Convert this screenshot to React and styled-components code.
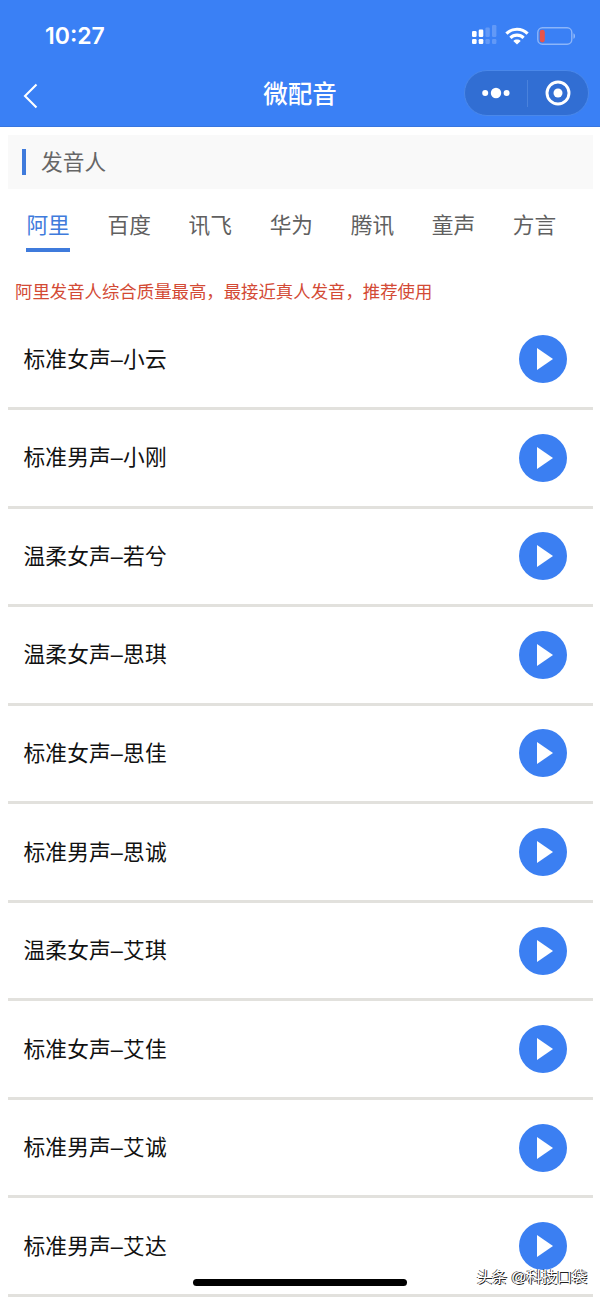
import { useState } from "react";
import styled, { createGlobalStyle } from "styled-components";

const tabs = ["阿里", "百度", "讯飞", "华为", "腾讯", "童声", "方言"];

const voices = [
  "标准女声–小云",
  "标准男声–小刚",
  "温柔女声–若兮",
  "温柔女声–思琪",
  "标准女声–思佳",
  "标准男声–思诚",
  "温柔女声–艾琪",
  "标准女声–艾佳",
  "标准男声–艾诚",
  "标准男声–艾达",
];

const SignalIcon = () => (
  <svg width="25" height="20" viewBox="0 0 25 20" fill="#fff">
    <rect x="0" y="6" width="4.6" height="6" rx="1.2" />
    <rect x="6.7" y="4.5" width="4.6" height="7.5" rx="1.2" />
    <rect x="0" y="14" width="4.6" height="5" rx="1.2" />
    <rect x="6.7" y="14" width="4.6" height="5" rx="1.2" />
    <g opacity="0.2">
      <rect x="13.4" y="2.5" width="4.4" height="9.5" rx="1.2" />
      <rect x="20" y="0" width="4.4" height="12" rx="1.2" />
      <rect x="13.4" y="14" width="4.4" height="5" rx="1.2" />
      <rect x="20" y="14" width="4.4" height="5" rx="1.2" />
    </g>
  </svg>
);

const WifiIcon = () => (
  <svg width="24" height="18" viewBox="0 0 24 18">
    <g fill="none" stroke="#fff" strokeWidth="3.1">
      <path d="M1.4 6.6C7.2 .8 16.8 .8 22.6 6.6" />
      <path d="M5.4 10.8C9 7.2 15 7.2 18.6 10.8" />
    </g>
    <path d="M12 17.6L8.3 13.9C10.3 12.1 13.7 12.1 15.7 13.9Z" fill="#fff" />
  </svg>
);

const BatteryIcon = () => (
  <svg width="39" height="18" viewBox="0 0 39 18">
    <rect
      x="0.8"
      y="0.8"
      width="34"
      height="16.4"
      rx="4.6"
      fill="none"
      stroke="#fff"
      strokeOpacity="0.42"
      strokeWidth="1.4"
    />
    <rect x="2.8" y="2.8" width="5" height="12.6" rx="2.4" fill="#e8544a" />
    <path d="M36.5 6.2C38.4 7 38.4 11 36.5 11.8Z" fill="#fff" opacity="0.5" />
  </svg>
);

const BackIcon = () => (
  <svg width="16" height="26" viewBox="0 0 16 26">
    <path
      d="M13.5 1.5L2 13L13.5 24.5"
      fill="none"
      stroke="#fff"
      strokeWidth="2.1"
    />
  </svg>
);

const MoreIcon = () => (
  <svg width="28" height="12" viewBox="0 0 28 12" fill="#fff">
    <circle cx="3.2" cy="6" r="3" />
    <circle cx="14" cy="6" r="5.2" />
    <circle cx="24.6" cy="6" r="3" />
  </svg>
);

const CloseIcon = () => (
  <svg width="26" height="26" viewBox="0 0 26 26">
    <circle cx="13" cy="13" r="11" fill="none" stroke="#fff" strokeWidth="2.9" />
    <circle cx="13" cy="13" r="4.5" fill="#fff" />
  </svg>
);

const PlayIcon = () => (
  <svg width="16" height="22" viewBox="0 0 16 22">
    <path d="M0 0L16 11L0 22Z" fill="#fff" />
  </svg>
);

const App = () => {
  const [active, setActive] = useState(0);

  return (
    <Page>
      <GlobalStyle />
      <Header>
        <StatusBar>
          <Time>10:27</Time>
          <StatusIcons>
            <SignalIcon />
            <WifiIcon />
            <BatteryIcon />
          </StatusIcons>
        </StatusBar>
        <NavBar>
          <BackButton>
            <BackIcon />
          </BackButton>
          <Title>微配音</Title>
          <Capsule>
            <CapsuleButton>
              <MoreIcon />
            </CapsuleButton>
            <Divider />
            <CapsuleButton>
              <CloseIcon />
            </CapsuleButton>
          </Capsule>
        </NavBar>
      </Header>

      <Content>
        <SectionTitle>
          <span>发音人</span>
        </SectionTitle>
        <Tabs>
          {tabs.map((tab, index) => (
            <Tab
              key={tab}
              $active={index === active}
              onClick={() => setActive(index)}
            >
              {tab}
            </Tab>
          ))}
        </Tabs>
        <Notice>阿里发音人综合质量最高，最接近真人发音，推荐使用</Notice>
        <VoiceList>
          {voices.map((voice) => (
            <VoiceRow key={voice}>
              <VoiceName>{voice}</VoiceName>
              <PlayButton>
                <PlayIcon />
              </PlayButton>
            </VoiceRow>
          ))}
        </VoiceList>
      </Content>

      <HomeIndicator />
      <Watermark>头条 @科技口袋</Watermark>
    </Page>
  );
};

export default App;

const GlobalStyle = createGlobalStyle`
  body {
    margin: 0;
    background-color: #fff;
    font-family: "Liberation Sans", "Noto Sans CJK SC", sans-serif;
  }
  button {
    padding: 0;
    border: none;
    background: none;
    font: inherit;
  }
  svg {
    display: block;
    flex-shrink: 0;
  }
`;

const Page = styled.main`
  position: relative;
  width: 600px;
  height: 1298px;
  overflow: hidden;
  background-color: #fff;
`;

const Header = styled.header`
  height: 127px;
  box-sizing: border-box;
  background-color: #3a80f5;
  border-bottom: 1px solid #3876df;
  color: #fff;
`;

const StatusBar = styled.div`
  display: flex;
  justify-content: space-between;
  height: 70px;
  padding: 0 24px 0 45px;
`;

const Time = styled.div`
  padding-top: 22px;
  font-family: Inter, sans-serif;
  font-size: 23px;
  font-weight: 600;
  line-height: 29px;
`;

const StatusIcons = styled.div`
  display: flex;
  align-items: flex-end;
  gap: 8px;
  height: 45px;
`;

const NavBar = styled.div`
  display: grid;
  grid-template-columns: 136px 1fr 136px;
  align-items: center;
  height: 46px;
`;

const BackButton = styled.button`
  padding: 5px 0 0 23px;
`;

const Title = styled.h1`
  margin: 0;
  padding-top: 3px;
  font-size: 24.5px;
  font-weight: 500;
  line-height: 43px;
  text-align: center;
`;

const Capsule = styled.div`
  display: flex;
  align-items: center;
  box-sizing: border-box;
  width: 125px;
  height: 46px;
  border: 1px solid #4a88ea;
  border-radius: 23px;
  background-color: #316ed3;
`;

const CapsuleButton = styled.button`
  display: flex;
  flex: 1 0 auto;
  justify-content: center;
`;

const Divider = styled.div`
  width: 1px;
  height: 27px;
  background-color: #4a82dc;
`;

const Content = styled.section`
  padding: 8px 7px 0 8px;
`;

const SectionTitle = styled.h2`
  display: flex;
  align-items: center;
  height: 54px;
  margin: 0;
  padding-left: 14px;
  background-color: #f9f9f9;
  color: #666;
  font-size: 21.7px;
  font-weight: 400;

  &:before {
    content: "";
    width: 4px;
    height: 26px;
    margin-right: 15px;
    background-color: #3f7bdc;
  }

  span {
    padding-bottom: 3px;
  }
`;

const Tabs = styled.nav`
  display: flex;
  height: 63px;
  padding-left: 0;
`;

const Tab = styled.button`
  box-sizing: border-box;
  height: 63px;
  margin: 0 19.3px 0 18.4px;
  padding-top: 10px;
  border-bottom: 4px solid ${({ $active }) => ($active ? "#3f7bdc" : "#fff")};
  color: ${({ $active }) => ($active ? "#3f7bdc" : "#606060")};
  font-size: 21.7px;
  white-space: nowrap;
`;

const Notice = styled.p`
  margin: 0;
  padding: 26px 0 0 7px;
  height: 33.5px;
  color: #d34a35;
  font-size: 17.4px;
  line-height: 28px;
`;

const VoiceList = styled.ul`
  margin: 0;
  padding: 0;
  list-style: none;
`;

const VoiceRow = styled.li`
  display: flex;
  align-items: center;
  justify-content: space-between;
  box-sizing: border-box;
  height: 98.55px;
  padding: 0 26px 0 15.5px;
  border-bottom: 3px solid #e2e1dd;
`;

const VoiceName = styled.span`
  padding-bottom: 4px;
  color: #111;
  font-size: 21.7px;
  letter-spacing: 0.15px;
`;

const PlayButton = styled.button`
  display: flex;
  align-items: center;
  justify-content: center;
  width: 48px;
  height: 48px;
  padding-left: 4px;
  border-radius: 50%;
  background-color: #3b7ff2;
`;

const HomeIndicator = styled.div`
  position: absolute;
  bottom: 12px;
  left: 193px;
  width: 214px;
  height: 7px;
  border-radius: 4px;
  background-color: #000;
`;

const Watermark = styled.div`
  position: absolute;
  right: 13px;
  bottom: 10px;
  color: #fff;
  font-size: 15.1px;
  line-height: 22px;
  white-space: nowrap;
  text-shadow: 1px 1px 0 #222, -1px 0 0 #444;
`;
